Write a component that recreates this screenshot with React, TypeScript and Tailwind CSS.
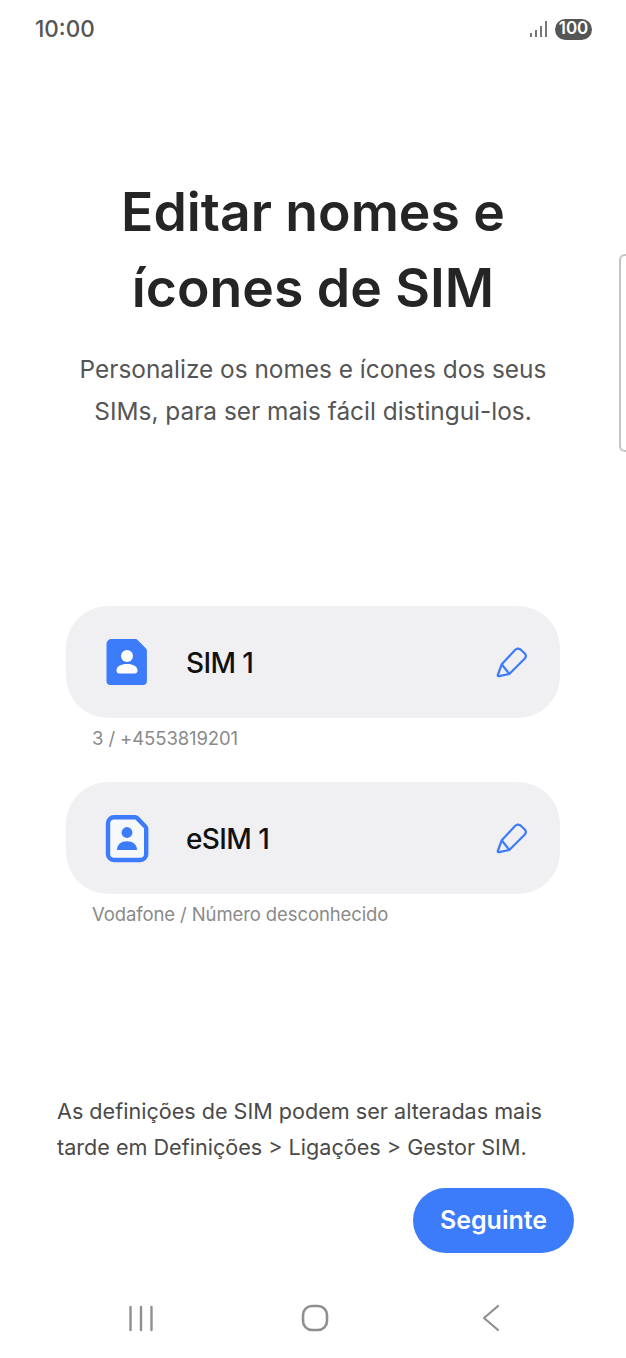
const font = { fontFamily: '"Inter", "Noto Sans", sans-serif' }

function SimIcon({ outline }: { outline: boolean }) {
    return (
        <svg width="44" height="50" viewBox="0 0 44 50" className="shrink-0">
            {outline ? (
                <>
                    <path d="M9 4.200H30a3 3 0 0 1 2.100.9L40.300 13.500a3 3 0 0 1 .9 2.100V41a6 6 0 0 1-6 6H9a6 6 0 0 1-6-6V10.200a6 6 0 0 1 6-6Z" fill="#f7f8fb" stroke="#3c7bfa" strokeWidth="4.400" />
                    <circle cx="22" cy="19.500" r="5.400" fill="#3c7bfa" />
                    <path d="M12 37c0-5.800 4.200-8.800 10-8.800s10 3 10 8.800Z" fill="#3c7bfa" />
                </>
            ) : (
                <>
                    <path d="M6.500 2H30.500a3 3 0 0 1 2.100.9L41 11.500a3 3 0 0 1 .9 2.100V44a4 4 0 0 1-4 4H5.500a4 4 0 0 1-4-4V7a5 5 0 0 1 5-5Z" fill="#3c7bfa" />
                    <circle cx="22" cy="19" r="6" fill="#fff" />
                    <path d="M11.500 33.500c0-4.200 4.500-6.500 10.500-6.500s10.500 2.300 10.500 6.500a3 3 0 0 1-3 3H14.500a3 3 0 0 1-3-3Z" fill="#fff" />
                </>
            )}
        </svg>
    )
}

function Pencil() {
    return (
        <svg width="32" height="32" viewBox="0 0 32 32" fill="none" stroke="#3c7bfa" strokeWidth="2.200" strokeLinejoin="round" className="shrink-0">
            <path d="M5.700 18.300 19 4Q21.500 1.500 24.500 3.500L28.800 7.500Q31 10 28.600 12.800L13.300 28 3 30.200Q1.500 30.400 1.800 29Z" />
            <path d="M5.700 18.300 13.300 28" />
        </svg>
    )
}

function SimRow({ name, sub, outline }: { name: string; sub: string; outline: boolean }) {
    return (
        <div>
            <div className="flex items-center h-[112px] mx-[66px] pl-[39px] pr-[32px] rounded-[42px] bg-[#f0f0f3]">
                <SimIcon outline={outline} />
                <span className="ml-[37px] pt-[2px] flex-1 text-[28px] font-medium text-[#111111] tracking-[-0.6px]">{name}</span>
                <Pencil />
            </div>
            <p className="ml-[92px] mt-[8px] h-[24px] leading-[24px] text-[18.5px] text-[#8a8a8a] tracking-[-0.1px]">{sub}</p>
        </div>
    )
}

export default function App() {
    return (
        <div style={font} className="relative flex flex-col w-[626px] h-[1358px] bg-white overflow-hidden">
            <div className="flex items-center justify-between h-[58px] pl-[35px] pr-[34px]">
                <span className="text-[22.5px] font-medium text-[#555555]">10:00</span>
                <div className="flex items-center gap-[8px]">
                    <svg width="17" height="16" viewBox="0 0 17 16" fill="#777777">
                        <rect x="0" y="12" width="2" height="4" />
                        <rect x="5" y="9" width="2" height="7" />
                        <rect x="10" y="5" width="2" height="11" />
                        <rect x="15" y="0" width="2" height="16" />
                    </svg>
                    <span className="flex items-center justify-center w-[37px] h-[21px] rounded-full bg-[#555555] text-white text-[17px] font-semibold">100</span>
                </div>
            </div>

            <h1 className="mt-[116px] text-center text-[53.5px] leading-[76px] font-semibold text-[#252525]">
                Editar nomes e<br />ícones de SIM
            </h1>
            <p className="mt-[22px] text-center text-[24.4px] leading-[42px] text-[#555555]">
                Personalize os nomes e ícones dos seus<br />SIMs, para ser mais fácil distingui-los.
            </p>

            <div className="flex flex-col gap-[32px] mt-[174px]">
                <SimRow name="SIM 1" sub="3 / +4553819201" outline={false} />
                <SimRow name="eSIM 1" sub="Vodafone / Número desconhecido" outline={true} />
            </div>

            <p className="mt-[167px] ml-[57px] text-[21.6px] leading-[36px] text-[#4a4a4a]">
                As definições de SIM podem ser alteradas mais<br />tarde em Definições &gt; Ligações &gt; Gestor SIM.
            </p>

            <div className="flex justify-end mt-[23px] mr-[52px]">
                <button className="flex items-center justify-center w-[161px] h-[65px] rounded-full bg-[#3c7bfa] text-white text-[25px] font-semibold">Seguinte</button>
            </div>

            <div className="flex items-center mt-[51px] pl-[128px]">
                <svg width="26" height="28" viewBox="0 0 26 28" stroke="#8f8f8f" strokeWidth="2.400" strokeLinecap="round" className="shrink-0">
                    <path d="M2.500 3V26M13 3V26M23.500 3V26" />
                </svg>
                <svg width="28" height="28" viewBox="0 0 28 28" fill="none" stroke="#8f8f8f" strokeWidth="2.600" className="shrink-0 ml-[147px]">
                    <rect x="2" y="2" width="24" height="24" rx="9" />
                </svg>
                <svg width="18" height="28" viewBox="0 0 18 28" fill="none" stroke="#8f8f8f" strokeWidth="2.200" strokeLinecap="round" strokeLinejoin="round" className="shrink-0 ml-[153px]">
                    <path d="M16 2 2 14 16 26" />
                </svg>
            </div>

            <div className="absolute right-0 top-[254px] w-[7px] h-[198px] border-l-2 border-y-2 border-[#c4c4c4] rounded-l-[6px]" />
        </div>
    )
}
